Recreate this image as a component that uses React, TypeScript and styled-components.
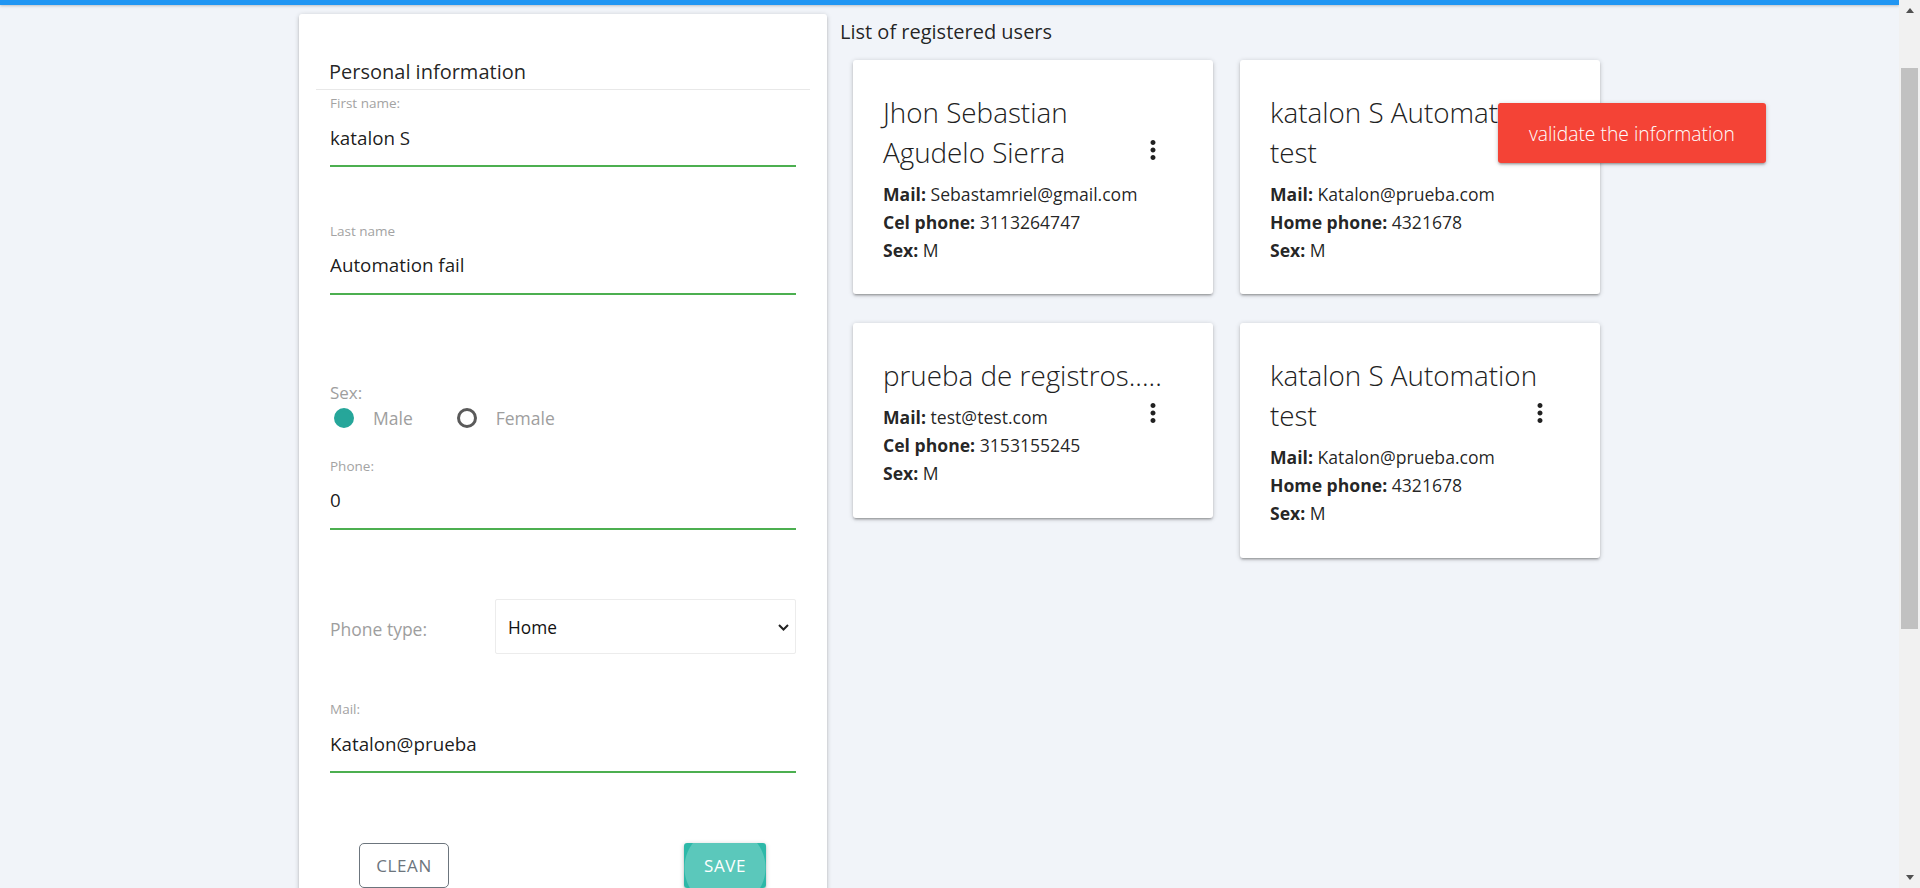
import React from "react";
import styled, { createGlobalStyle } from "styled-components";

const GlobalStyle = createGlobalStyle`
  * { box-sizing: border-box; }
  html, body { margin: 0; padding: 0; height: 100%; overflow: hidden; }
  body {
    font-family: "Open Sans", "Noto Sans", sans-serif;
    background: #f1f4f9;
    color: rgba(0, 0, 0, 0.87);
  }
  #root { height: 100%; }
`;

const Viewport = styled.div`
  display: flex;
  height: 100vh;
  overflow: hidden;
`;

const Page = styled.div`
  position: relative;
  flex: 1;
  min-width: 0;
  overflow: hidden;
  background: #f1f4f9;
`;

const TopBar = styled.div`
  height: 5px;
  background: #2196f3;
  box-shadow: 0 1px 3px rgba(0, 0, 0, 0.22);
`;

const Container = styled.div`
  width: 1329px;
  margin: 0 auto;
  display: flex;
  align-items: flex-start;
`;

const LeftCol = styled.div`
  width: 556px;
  flex-shrink: 0;
  padding: 0 14px;
`;

const shadow = `0 2px 2px 0 rgba(0,0,0,0.14), 0 3px 1px -2px rgba(0,0,0,0.12), 0 1px 5px 0 rgba(0,0,0,0.2)`;

const FormCard = styled.div`
  margin-top: 9px;
  background: #fff;
  border-radius: 3px;
  box-shadow: ${shadow};
  padding: 43px 17px 30px;
`;

const FormHeading = styled.h2`
  margin: 0;
  padding: 0 13px 2px;
  font-size: 20px;
  line-height: 30px;
  font-weight: 400;
  color: rgba(0, 0, 0, 0.87);
  border-bottom: 1px solid #e8e8e8;
`;

const FormBody = styled.div`
  padding: 0 14px;
`;

const Field = styled.div<{ $mt: number }>`
  margin-top: ${(p) => p.$mt}px;
`;

const FieldLabel = styled.label`
  display: block;
  height: 14px;
  font-size: 13.5px;
  line-height: 14px;
  color: #a3a3a3;
`;

const TextInput = styled.input`
  display: block;
  width: 100%;
  height: 56px;
  margin: 0;
  padding: 0;
  border: none;
  border-bottom: 1px solid #4caf50;
  box-shadow: 0 1px 0 0 #4caf50;
  background: transparent;
  outline: none;
  font-family: inherit;
  font-size: 18.8px;
  color: rgba(0, 0, 0, 0.9);
`;

const SexGroup = styled.div<{ $mt: number }>`
  margin-top: ${(p) => p.$mt}px;
`;

const GroupLabel = styled.div`
  height: 22px;
  font-size: 17px;
  line-height: 22px;
  color: #9e9e9e;
`;

const RadioRow = styled.div`
  display: flex;
  align-items: center;
  height: 28px;
  gap: 40px;
`;

const RadioOption = styled.label`
  display: inline-flex;
  align-items: center;
  font-size: 17.5px;
  color: #9e9e9e;
`;

const RadioDot = styled.span<{ $checked?: boolean }>`
  width: 20px;
  height: 20px;
  margin: 0 19px 0 4px;
  border-radius: 50%;
  background: ${(p) => (p.$checked ? "#26a69a" : "transparent")};
  border: 3px solid ${(p) => (p.$checked ? "#26a69a" : "#5a5a5a")};
`;

const SelectRow = styled.div<{ $mt: number }>`
  margin-top: ${(p) => p.$mt}px;
  display: flex;
  align-items: center;
  height: 55px;
`;

const SelectLabel = styled.span`
  width: 165px;
  flex-shrink: 0;
  font-size: 17.5px;
  color: #9e9e9e;
  padding-top: 4px;
`;

const SelectWrap = styled.div`
  position: relative;
  flex: 1;
  height: 55px;
`;

const Select = styled.select`
  appearance: none;
  -webkit-appearance: none;
  width: 100%;
  height: 100%;
  border: 1px solid #ececec;
  border-radius: 2px;
  background: #fff;
  padding: 1px 0 0 12px;
  font-family: inherit;
  font-size: 17.3px;
  color: #111;
  outline: none;
`;

const Chevron = styled.svg`
  position: absolute;
  right: 7px;
  top: 50%;
  margin-top: -3px;
  pointer-events: none;
`;

const ButtonRow = styled.div<{ $mt: number }>`
  margin-top: ${(p) => p.$mt}px;
  display: flex;
  justify-content: space-between;
  padding: 0 30px 0 29px;
`;

const OutlineButton = styled.button`
  width: 90px;
  height: 45px;
  border: 1px solid #6c757d;
  border-radius: 5px;
  background: #fff;
  color: #6c757d;
  font-family: inherit;
  font-size: 17px;
  letter-spacing: 0.6px;
  text-transform: uppercase;
`;

const SaveButton = styled.button`
  width: 82px;
  height: 45px;
  border: none;
  border-radius: 3px;
  background: radial-gradient(circle at 50% 55%, #5bc8bb 0 40px, #2db8a8 41px);
  color: #fff;
  font-family: inherit;
  font-size: 17px;
  letter-spacing: 0.6px;
  text-transform: uppercase;
  box-shadow: ${shadow};
`;

const RightCol = styled.div`
  flex: 1;
  padding-top: 13px;
`;

const ListTitle = styled.h3`
  margin: 0 0 14px -1px;
  font-size: 20px;
  line-height: 28px;
  font-weight: 400;
  color: rgba(0, 0, 0, 0.87);
`;

const CardGrid = styled.div`
  display: flex;
  flex-wrap: wrap;
  align-items: flex-start;
  gap: 29px 27px;
  padding-left: 12px;
`;

const UserCard = styled.div`
  width: 360px;
  background: #fff;
  border-radius: 3px;
  box-shadow: ${shadow};
  padding: 30px;
`;

const CardTitle = styled.div`
  font-size: 27.8px;
  font-weight: 300;
  line-height: 40px;
  color: #212121;
  padding: 2px 15px 0 0;
  margin-bottom: 8px;
`;

const MenuIcon = styled.span`
  float: right;
  width: 30px;
  height: 40px;
  margin: -2px 0 0 19px;
  display: flex;
  align-items: center;
  justify-content: center;
  color: #212121;
`;

const InfoLine = styled.p`
  margin: 0;
  font-size: 17.6px;
  line-height: 28.1px;
  color: rgba(0, 0, 0, 0.87);
  b { font-weight: 700; }
`;

const Toast = styled.div`
  position: absolute;
  top: 103px;
  right: 133px;
  height: 60px;
  padding: 0 31px;
  display: flex;
  align-items: center;
  background: #f44336;
  color: #fff;
  font-size: 19.3px;
  font-weight: 300;
  border-radius: 3px;
  box-shadow: ${shadow};
`;

const Scrollbar = styled.div`
  width: 21px;
  flex-shrink: 0;
  display: flex;
  flex-direction: column;
  background: #f1f1f1;
`;

const ScrollArrow = styled.div<{ $down?: boolean }>`
  height: 21px;
  display: flex;
  align-items: center;
  justify-content: center;
  &::before {
    content: "";
    width: 0;
    height: 0;
    border-left: 4.5px solid transparent;
    border-right: 4.5px solid transparent;
    ${(p) =>
      p.$down
        ? "border-top: 5px solid #505050;"
        : "border-bottom: 5px solid #505050;"}
  }
`;

const ScrollTrack = styled.div`
  flex: 1;
  padding: 47px 2px 0;
`;

const ScrollThumb = styled.div`
  height: 561px;
  background: #c1c1c1;
`;

type User = { name: string; mail: string; phoneLabel: string; phone: string; sex: string };

const users: User[] = [
  { name: "Jhon Sebastian Agudelo Sierra", mail: "Sebastamriel@gmail.com", phoneLabel: "Cel phone:", phone: "3113264747", sex: "M" },
  { name: "katalon S Automation test", mail: "Katalon@prueba.com", phoneLabel: "Home phone:", phone: "4321678", sex: "M" },
  { name: "prueba de registros.....", mail: "test@test.com", phoneLabel: "Cel phone:", phone: "3153155245", sex: "M" },
  { name: "katalon S Automation test", mail: "Katalon@prueba.com", phoneLabel: "Home phone:", phone: "4321678", sex: "M" },
];

const MoreVert = () => (
  <svg width="30" height="30" viewBox="0 0 24 24">
    <path
      fill="currentColor"
      d="M12 8c1.1 0 2-.9 2-2s-.9-2-2-2-2 .9-2 2 .9 2 2 2zm0 2c-1.1 0-2 .9-2 2s.9 2 2 2 2-.9 2-2-.9-2-2-2zm0 6c-1.1 0-2 .9-2 2s.9 2 2 2 2-.9 2-2-.9-2-2-2z"
    />
  </svg>
);

export default function App() {
  return (
    <>
      <GlobalStyle />
      <Viewport>
        <Page>
          <TopBar />
          <Container>
            <LeftCol>
              <FormCard>
                <FormHeading>Personal information</FormHeading>
                <FormBody>
                  <Field $mt={6}>
                    <FieldLabel>First name:</FieldLabel>
                    <TextInput defaultValue="katalon S" />
                  </Field>
                  <Field $mt={57.5}>
                    <FieldLabel>Last name</FieldLabel>
                    <TextInput defaultValue="Automation fail" />
                  </Field>
                  <SexGroup $mt={88}>
                    <GroupLabel>Sex:</GroupLabel>
                    <RadioRow>
                      <RadioOption>
                        <RadioDot $checked />
                        Male
                      </RadioOption>
                      <RadioOption>
                        <RadioDot />
                        Female
                      </RadioOption>
                    </RadioRow>
                  </SexGroup>
                  <Field $mt={27}>
                    <FieldLabel>Phone:</FieldLabel>
                    <TextInput defaultValue="0" />
                  </Field>
                  <SelectRow $mt={70.5}>
                    <SelectLabel>Phone type:</SelectLabel>
                    <SelectWrap>
                      <Select defaultValue="home">
                        <option value="home">Home</option>
                        <option value="cel">Cel</option>
                      </Select>
                      <Chevron width="11" height="7" viewBox="0 0 11 7">
                        <path d="M1 1l4.5 4.5L10 1" fill="none" stroke="#222" strokeWidth="2" />
                      </Chevron>
                    </SelectWrap>
                  </SelectRow>
                  <Field $mt={48}>
                    <FieldLabel>Mail:</FieldLabel>
                    <TextInput defaultValue="Katalon@prueba" />
                  </Field>
                  <ButtonRow $mt={71}>
                    <OutlineButton>Clean</OutlineButton>
                    <SaveButton>Save</SaveButton>
                  </ButtonRow>
                </FormBody>
              </FormCard>
            </LeftCol>
            <RightCol>
              <ListTitle>List of registered users</ListTitle>
              <CardGrid>
                {users.map((u, i) => (
                  <UserCard key={i}>
                    <CardTitle>
                      {u.name}
                      <MenuIcon>
                        <MoreVert />
                      </MenuIcon>
                    </CardTitle>
                    <InfoLine>
                      <b>Mail:</b> {u.mail}
                    </InfoLine>
                    <InfoLine>
                      <b>{u.phoneLabel}</b> {u.phone}
                    </InfoLine>
                    <InfoLine>
                      <b>Sex:</b> {u.sex}
                    </InfoLine>
                  </UserCard>
                ))}
              </CardGrid>
            </RightCol>
          </Container>
          <Toast>validate the information</Toast>
        </Page>
        <Scrollbar>
          <ScrollArrow />
          <ScrollTrack>
            <ScrollThumb />
          </ScrollTrack>
          <ScrollArrow $down />
        </Scrollbar>
      </Viewport>
    </>
  );
}
